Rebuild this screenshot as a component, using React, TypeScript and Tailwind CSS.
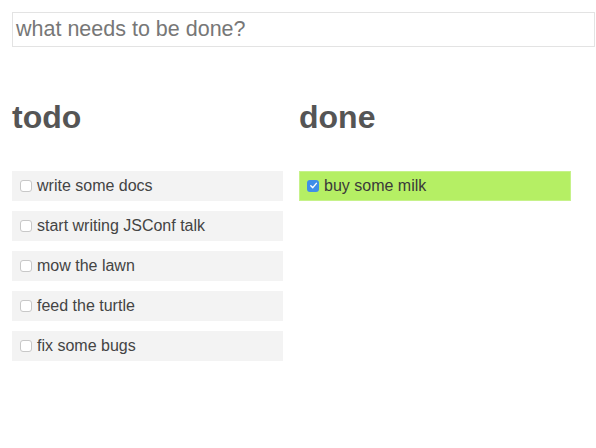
import React from "react";

const font = { fontFamily: '"Liberation Sans", Arial, sans-serif' };

function Box({ checked }: { checked?: boolean }) {
  if (checked) {
    return (
      <span className="flex h-[12px] w-[12px] shrink-0 items-center justify-center rounded-[3px] bg-[#3f8ee8]">
        <svg width="9" height="9" viewBox="0 0 10 10">
          <path d="M2 5.2 L4.2 7.4 L8.2 2.6" stroke="#fff" strokeWidth="1.6" fill="none" strokeLinecap="round" strokeLinejoin="round" />
        </svg>
      </span>
    );
  }
  return <span className="block h-[12px] w-[12px] shrink-0 rounded-[3px] border border-[#c8c8c8] bg-white" />;
}

function Item({ text, done }: { text: string; done?: boolean }) {
  return (
    <div
      className={
        "flex h-[30px] items-center gap-[5px] pl-[8px] text-[16px] " +
        (done
          ? "bg-[#b5ef64] text-[#3a3a3a] shadow-[inset_0_0_0_1px_#c6f28a]"
          : "bg-[#f3f3f3] text-[#444]")
      }
    >
      <Box checked={done} />
      <span>{text}</span>
    </div>
  );
}

export default function App() {
  const todos = ["write some docs", "start writing JSConf talk", "mow the lawn", "feed the turtle", "fix some bugs"];
  return (
    <div className="h-[448px] w-[596px] bg-white pl-[12px] pt-[12px]" style={font}>
      <div className="flex h-[35px] w-[583px] items-center border border-[#e3e3e3] pl-[3px] text-[21.5px] text-[#777]">
        what needs to be done?
      </div>
      <div className="mt-[52px] grid grid-cols-[271px_272px] gap-x-[16px]">
        <div>
          <h2 className="text-[32px] leading-[1.15] font-bold text-[#555]">todo</h2>
          <div className="mt-[35px] flex flex-col gap-[10px]">
            {todos.map((t) => (
              <Item key={t} text={t} />
            ))}
          </div>
        </div>
        <div>
          <h2 className="text-[32px] leading-[1.15] font-bold text-[#555]">done</h2>
          <div className="mt-[35px] flex flex-col gap-[10px]">
            <Item text="buy some milk" done />
          </div>
        </div>
      </div>
    </div>
  );
}
